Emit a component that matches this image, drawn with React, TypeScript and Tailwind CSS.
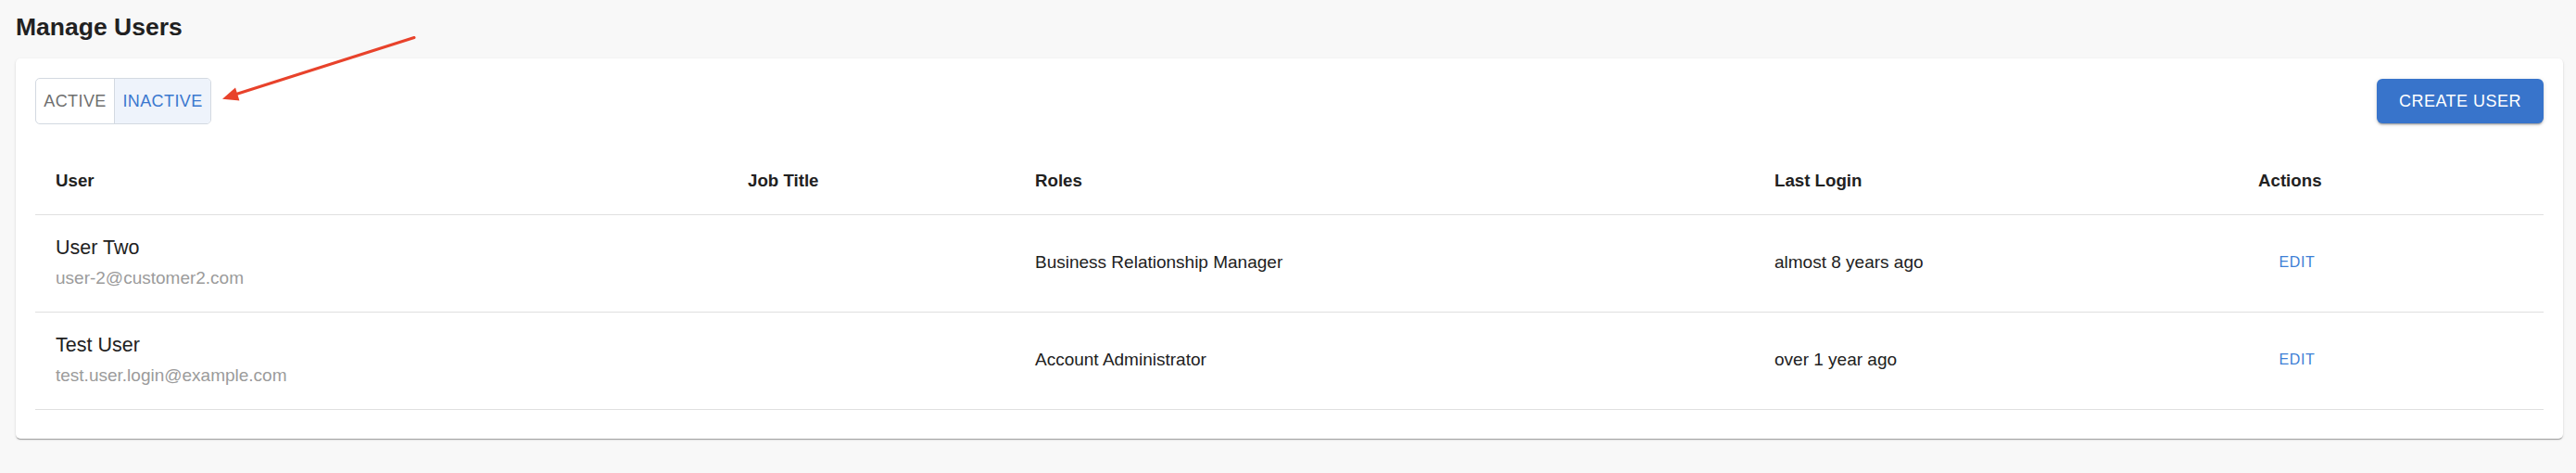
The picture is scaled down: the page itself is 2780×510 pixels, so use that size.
import { useState } from "react";

interface UserRow {
  name: string;
  email: string;
  jobTitle: string;
  role: string;
  lastLogin: string;
}

const users: UserRow[] = [
  {
    name: "User Two",
    email: "user-2@customer2.com",
    jobTitle: "",
    role: "Business Relationship Manager",
    lastLogin: "almost 8 years ago",
  },
  {
    name: "Test User",
    email: "test.user.login@example.com",
    jobTitle: "",
    role: "Account Administrator",
    lastLogin: "over 1 year ago",
  },
];

const cols = "grid grid-cols-[747px_310px_798px_522px_1fr]";

function StatusToggle() {
  const [status, setStatus] = useState<"active" | "inactive">("inactive");

  return (
    <div className="flex h-[50px] rounded-[5px] border border-[#d3d9e1] overflow-hidden">
      <button
        onClick={() => setStatus("active")}
        className={`w-[84px] text-[18px] tracking-[0.4px] uppercase ${
          status === "active" ? "bg-[#eef3fb] text-[#3a77cf]" : "text-[#6f6f6f]"
        }`}
      >
        Active
      </button>
      <button
        onClick={() => setStatus("inactive")}
        className={`w-[104px] border-l border-[#d3d9e1] text-[18px] tracking-[0.4px] uppercase ${
          status === "inactive" ? "bg-[#eef3fb] text-[#3a77cf]" : "text-[#6f6f6f]"
        }`}
      >
        Inactive
      </button>
    </div>
  );
}

export default function App() {
  return (
    <div className="relative min-h-[510px] bg-[#f8f8f8] pl-[17px] pr-[14px] pt-[13px] font-['Liberation_Sans',Arial,sans-serif] text-[#212121]">
      <h1 className="text-[26.5px] leading-[32px] font-bold">Manage Users</h1>

      {/* callout arrow pointing at the status toggle */}
      <svg
        className="absolute left-0 top-0 pointer-events-none"
        width="470"
        height="130"
        viewBox="0 0 470 130"
      >
        <line x1="447" y1="40.5" x2="255" y2="101.5" stroke="#e8422b" strokeWidth="3" strokeLinecap="round" />
        <polygon points="240,106.7 254,94.6 258.4,108.4" fill="#e8422b" />
      </svg>

      <div className="mt-[18px] rounded-[5px] bg-white px-[21px] pt-[21px] pb-[31px] shadow-[0_2px_1px_-1px_rgba(0,0,0,0.2),0_1px_1px_0_rgba(0,0,0,0.14),0_1px_3px_0_rgba(0,0,0,0.12)]">
        <div className="flex items-center justify-between">
          <StatusToggle />
          <button className="h-[48px] w-[180px] rounded-[6px] bg-[#3874cb] text-[18px] tracking-[0.5px] text-white uppercase shadow-[0_3px_1px_-2px_rgba(0,0,0,0.2),0_2px_2px_0_rgba(0,0,0,0.14),0_1px_5px_0_rgba(0,0,0,0.12)]">
            Create User
          </button>
        </div>

        <div className="mt-[25px]">
          <div className={`${cols} h-[73px] items-center border-b border-[#e0e0e0] pb-[2px] text-[18.7px] font-bold leading-[31px]`}>
            <div className="px-[22px]">User</div>
            <div className="px-[22px]">Job Title</div>
            <div className="px-[22px]">Roles</div>
            <div className="px-[22px]">Last Login</div>
            <div className="px-[22px]">Actions</div>
          </div>

          {users.map((u) => (
            <div
              key={u.email}
              className={`${cols} h-[105px] items-center border-b border-[#e0e0e0] pb-[2px] text-[19px] leading-[26px]`}
            >
              <div className="px-[22px]">
                <div className="-mt-[1px] text-[21.5px] leading-[28px]">{u.name}</div>
                <div className="mt-[6px] text-[#9b9b9b]">{u.email}</div>
              </div>
              <div className="px-[22px]">{u.jobTitle}</div>
              <div className="px-[22px]">{u.role}</div>
              <div className="px-[22px]">{u.lastLogin}</div>
              <div className="px-[22px]">
                <button className="w-[84px] py-[5px] text-center text-[16px] tracking-[0.6px] text-[#3d7fd6] uppercase">
                  Edit
                </button>
              </div>
            </div>
          ))}
        </div>
      </div>
    </div>
  );
}
